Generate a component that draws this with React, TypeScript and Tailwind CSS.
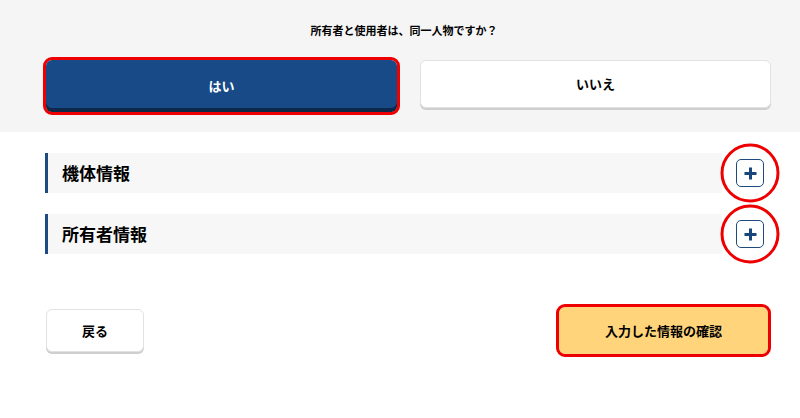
import React from "react";

const SECTIONS = ["機体情報", "所有者情報"];

function PlusBox() {
  return (
    <div className="relative ml-[14px] mr-[7px] flex size-7 shrink-0 items-center justify-center">
      <button className="flex size-7 items-center justify-center rounded-[5px] border-[1.5px] border-[#1d4a80] bg-white">
        <svg width="15" height="15" viewBox="0 0 15 15">
          <path d="M7.5 1.5v12M1.5 7.5h12" stroke="#17457d" strokeWidth="3" strokeLinecap="butt" />
        </svg>
      </button>
      {/* annotation ring */}
      <span className="pointer-events-none absolute left-1/2 top-1/2 size-[59px] -translate-x-1/2 -translate-y-1/2 rounded-full border-[3.5px] border-[#ee0000]" />
    </div>
  );
}

export default function App() {
  return (
    <div
      className="h-[418px] w-[800px] bg-white text-black"
      style={{ fontFamily: '"Noto Sans CJK JP", "Noto Sans", sans-serif' }}
    >
      {/* Question band */}
      <div className="h-[132px] bg-[#f5f5f5] pt-[22px]">
        <p className="ml-[8px] text-center text-[11px] font-bold leading-4">
          所有者と使用者は、同一人物ですか？
        </p>
        <div className="ml-[46px] mt-[22px] grid w-[725px] grid-cols-2 gap-[23px]">
          <button className="h-[52px] rounded-[6px] bg-[#174a86] text-[13px] font-bold text-white shadow-[inset_0_-4px_0_#0d2849] outline-[3px] outline-[#ee0000] outline-solid">
            はい
          </button>
          <button className="h-[48px] rounded-[6px] border border-[#e2e2e2] bg-white text-[13px] font-bold shadow-[0_2px_0_#cfcfcf]">
            いいえ
          </button>
        </div>
      </div>

      {/* Accordion rows */}
      <div className="ml-[45px] mt-[21px] flex w-[726px] flex-col gap-[21px]">
        {SECTIONS.map((s) => (
          <div key={s} className="flex items-center">
            <div className="flex h-10 flex-1 items-center border-l-[3px] border-[#1d4a80] bg-[#f7f7f7] pl-[14px] text-[17px] font-bold">
              {s}
            </div>
            <PlusBox />
          </div>
        ))}
      </div>

      {/* Footer buttons */}
      <div className="ml-[46px] mt-[53px] flex w-[722px] items-center justify-between">
        <button className="h-[43px] w-[98px] rounded-[6px] border border-[#e2e2e2] bg-white text-[13px] font-bold shadow-[0_2px_0_#cfcfcf]">
          戻る
        </button>
        <button className="h-[47px] w-[209px] rounded-[6px] bg-[#ffd47a] text-[13px] font-bold outline-[3.5px] outline-[#ee0000] outline-solid">
          入力した情報の確認
        </button>
      </div>
    </div>
  );
}
